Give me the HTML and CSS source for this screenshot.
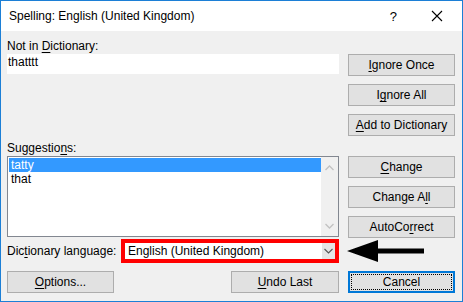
FILE: index.html
```html
<!DOCTYPE html>
<html>
  <head>
    <title>Spelling: English (United Kingdom)</title>
    <meta charset="UTF-8">
    <link rel="stylesheet" href="styles.css">
  </head>
  <body>
    <div class="window">
      <div class="titlebar">
        <span class="title">Spelling: English (United Kingdom)</span>
        <span class="help">?</span>
        <svg class="close" width="12" height="12" viewBox="0 0 12 12">
          <path d="M1 1 L11 11 M11 1 L1 11" stroke="#000" stroke-width="1.1" fill="none"/>
        </svg>
      </div>
      <div class="content">
        <!-- Not in dictionary block -->
        <div class="section">
          <div class="left">
            <div class="label">Not in <u>D</u>ictionary:</div>
            <div class="word-box">thatttt</div>
          </div>
          <div class="right top-buttons">
            <div class="btn"><u>I</u>gnore Once</div>
            <div class="btn">I<u>g</u>nore All</div>
            <div class="btn"><u>A</u>dd to Dictionary</div>
          </div>
        </div>
        <!-- Suggestions block -->
        <div class="section">
          <div class="left">
            <div class="label sugg-label">Suggestio<u>n</u>s:</div>
            <div class="listbox">
              <div class="items">
                <div class="item selected">tatty</div>
                <div class="item">that</div>
              </div>
              <div class="scrollbar">
                <svg width="9" height="6" viewBox="0 0 9 6"><path d="M0.5 5 L4.5 1 L8.5 5" stroke="#c2c2c2" stroke-width="1.3" fill="none"/></svg>
                <svg width="9" height="6" viewBox="0 0 9 6"><path d="M0.5 1 L4.5 5 L8.5 1" stroke="#c2c2c2" stroke-width="1.3" fill="none"/></svg>
              </div>
            </div>
          </div>
          <div class="right mid-buttons">
            <div class="btn"><u>C</u>hange</div>
            <div class="btn">Change A<u>l</u>l</div>
            <div class="btn">AutoCo<u>r</u>rect</div>
          </div>
        </div>
        <!-- Dictionary language row -->
        <div class="lang-row">
          <div class="lang-label">Dic<u>t</u>ionary language:</div>
          <div class="combo">
            <span class="combo-text">English (United Kingdom)</span>
            <span class="combo-drop">
              <svg width="9" height="6" viewBox="0 0 9 6"><path d="M0.5 1 L4.5 5 L8.5 1" stroke="#555" stroke-width="1.1" fill="none"/></svg>
            </span>
          </div>
          <svg class="arrow" width="78" height="22" viewBox="0 0 78 22">
            <polygon points="0,11 31,0 31,8.5 77,8.5 77,13.5 31,13.5 31,22" fill="#000"/>
          </svg>
        </div>
        <!-- Bottom buttons -->
        <div class="bottom-row">
          <div class="btn options"><u>O</u>ptions...</div>
          <div class="btn undo"><u>U</u>ndo Last</div>
          <div class="btn cancel"><span class="focus">Cancel</span></div>
        </div>
      </div>
    </div>
  </body>
</html>
```
FILE: styles.css
```css
/* Word spelling dialog */
body {
  margin: 0;
  padding: 0;
  font-family: "Liberation Sans", Arial, sans-serif;
  font-size: 12px;
  color: #000;
  background-color: #f0f0f0;
}

.window {
  width: 463px;
  height: 302px;
  box-sizing: border-box;
  border: 1px solid #1c7fd6;
  background-color: #f0f0f0;
}

.titlebar {
  height: 30px;
  background-color: #fff;
  display: flex;
  align-items: center;
  padding-left: 8px;
}

.title {
  font-size: 12px;
  flex: 1;
}

.help {
  font-size: 13px;
  margin-right: 34px;
}

.close {
  margin-right: 19px;
}

.content {
  padding: 0 0 0 6px;
}

.section {
  display: flex;
}

.left {
  width: 332px;
}

.right {
  margin-left: 9px;
  width: 107px;
  display: flex;
  flex-direction: column;
  gap: 8px;
}

.label {
  height: 15px;
  line-height: 15px;
  margin-top: 8px;
}

.word-box {
  height: 20px;
  background-color: #fff;
  padding-left: 1px;
  line-height: 16px;
}

.top-buttons {
  margin-top: 23px;
}

.btn {
  box-sizing: border-box;
  height: 22px;
  width: 107px;
  border: 1px solid #adadad;
  background-color: #e1e1e1;
  text-align: center;
  line-height: 20px;
  white-space: nowrap;
}

u {
  text-decoration-thickness: 1px;
  text-underline-offset: 2px;
}

.sugg-label {
  margin-top: 5px;
}

.listbox {
  box-sizing: border-box;
  height: 81px;
  border: 1px solid #828790;
  background-color: #fff;
  display: flex;
}

.items {
  flex: 1;
  padding: 1px 0 0 1px;
}

.item {
  height: 14px;
  line-height: 14px;
  padding-left: 2px;
}

.item.selected {
  background-color: #3399ff;
  color: #fff;
}

.scrollbar {
  width: 17px;
  background-color: #f0f0f0;
  display: flex;
  flex-direction: column;
  justify-content: space-between;
  align-items: center;
  padding: 8px 0 7px;
  box-sizing: border-box;
}

.mid-buttons {
  margin-top: 20px;
}

.lang-row {
  display: flex;
  align-items: center;
  margin-top: 1px;
  height: 24px;
}

.lang-label {
  width: 114px;
  white-space: nowrap;
}

.combo {
  box-sizing: border-box;
  width: 218px;
  height: 24px;
  border: 4px solid #ff0000;
  background-color: #fff;
  display: flex;
  align-items: center;
}

.combo-text {
  flex: 1;
  padding-left: 3px;
  white-space: nowrap;
}

.combo-drop {
  width: 13px;
  height: 16px;
  background-color: #e5e5e5;
  display: flex;
  align-items: center;
  justify-content: center;
}

.combo-drop svg {
  display: block;
}

.arrow {
  margin-left: 8px;
}

.bottom-row {
  display: flex;
  margin-top: 8px;
}

.options {
  width: 107px;
}

.undo {
  width: 108px;
  margin-left: 117px;
}

.cancel {
  margin-left: 9px;
  border: 2px solid #0078d7;
  padding: 1px;
  line-height: 14px;
}

.focus {
  display: block;
  height: 14px;
  border: 1px dotted #000;
}
```
